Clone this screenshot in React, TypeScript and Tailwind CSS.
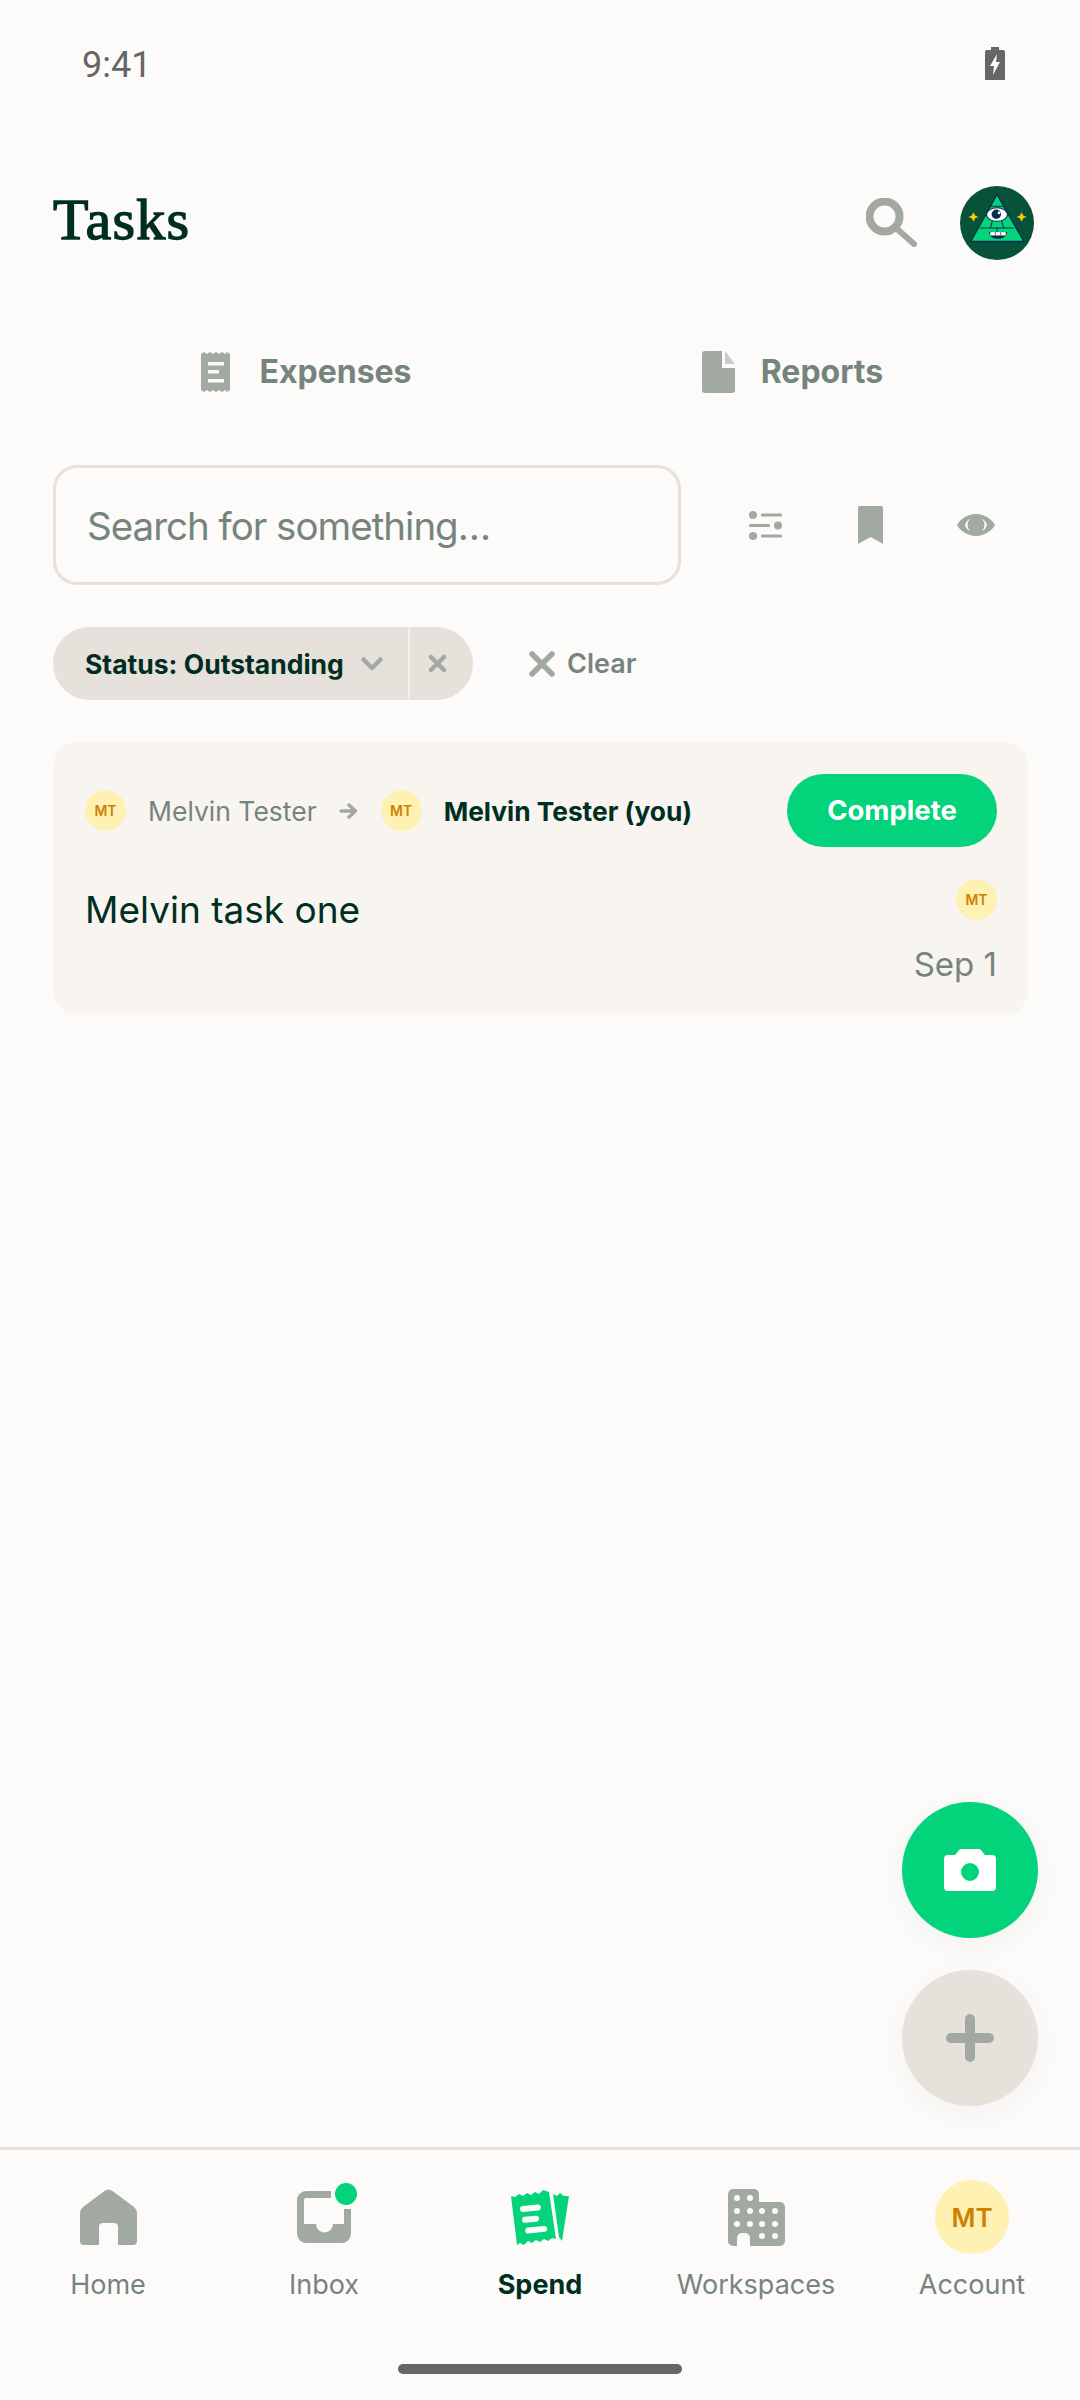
import React from "react";

const ICON = "#a2a9a3";
const BG = "#fcfbf9";
const SANS = "font-['Inter','Noto_Sans',sans-serif]";

function Initials({ large }: { large?: boolean }) {
  return (
    <div
      className={
        large
          ? "flex h-[74px] w-[74px] items-center justify-center rounded-full bg-[#fef1b2] text-[26px] font-semibold text-[#d08000]"
          : "flex h-[41px] w-[41px] shrink-0 items-center justify-center rounded-full bg-[#fef1b2] text-[14px] font-semibold text-[#d08000]"
      }
    >
      MT
    </div>
  );
}

function Avatar() {
  return (
    <svg width="74" height="74" viewBox="0 0 220 220">
      <circle cx="110" cy="110" r="110" fill="#085239" />
      <path d="M110 25 L190 165 H32 Z" fill="#03d47c" stroke="#0a2c4a" strokeWidth="4" strokeLinejoin="round" />
      <path d="M89 60 H131 M60 125 H160 M96 105 L90 125 M124 105 L130 125 M110 125 V138" stroke="#0a2c4a" strokeWidth="3" fill="none" />
      <ellipse cx="110" cy="85" rx="31" ry="20" fill="#fff" stroke="#0a2c4a" strokeWidth="3" />
      <circle cx="108" cy="84" r="14" fill="#0a2c4a" />
      <circle cx="116" cy="80" r="4" fill="#fff" />
      <path d="M40 78 L45 88 L55 92 L45 96 L40 106 L35 96 L25 92 L35 88 Z" fill="#fcc800" />
      <path d="M183 78 L188 88 L198 92 L188 96 L183 106 L178 96 L168 92 L178 88 Z" fill="#fcc800" />
      <path d="M86 137 H140 C138 152 125 157 113 157 C100 157 88 152 86 137 Z" fill="#0a2c4a" />
      <path d="M90 137 H136 V147 H90 Z" fill="#fff" />
      <path d="M105 137 V147 M121 137 V147" stroke="#0a2c4a" strokeWidth="2" />
    </svg>
  );
}

function ExpenseIcon() {
  return (
    <svg width="29" height="40" viewBox="0 0 29 40">
      <path
        fill={ICON}
        d="M0 2 L3 0 L6 2 L9 0 L12 2 L15 0 L18 2 L21 0 L24 2 L26 0 L29 2 V38 L26 40 L24 38 L21 40 L18 38 L15 40 L12 38 L9 40 L6 38 L3 40 L0 38 Z"
      />
      <path fill={BG} d="M7 10 H23 V13.5 H7 Z M7 18 H18 V21.5 H7 Z M7 27 H23 V30.5 H7 Z" />
    </svg>
  );
}

function ReportIcon() {
  return (
    <svg width="33" height="42" viewBox="0 0 33 42">
      <path fill={ICON} d="M3 0 H20 V17 H33 V39 A3 3 0 0 1 30 42 H3 A3 3 0 0 1 0 39 V3 A3 3 0 0 1 3 0 Z" />
      <path fill="#c9ccc8" d="M23 0 L33 13 H23 Z" />
    </svg>
  );
}

function SlidersIcon() {
  return (
    <svg width="33" height="29" viewBox="0 0 33 29">
      <g fill={ICON}>
        <circle cx="4" cy="4" r="4" />
        <rect x="12" y="2.5" width="21" height="3" rx="1" />
        <rect x="0" y="13" width="21" height="3" rx="1" />
        <circle cx="29" cy="14.5" r="4" />
        <circle cx="4" cy="25" r="4" />
        <rect x="12" y="23.5" width="21" height="3" rx="1" />
      </g>
    </svg>
  );
}

function BottomNav() {
  const items = [
    {
      label: "Home",
      icon: (
        <svg width="57" height="56" viewBox="0 0 57 56">
          <path
            fill={ICON}
            d="M24.5 2 Q28.5 -1 32.5 2 L54 18 Q57 20.5 57 24 V52 Q57 56 53 56 H38 V38 Q38 34 34 34 H23 Q19 34 19 38 V56 H4 Q0 56 0 52 V24 Q0 20.5 3 18 Z"
          />
        </svg>
      ),
    },
    {
      label: "Inbox",
      icon: (
        <div className="relative">
          <svg width="54" height="52" viewBox="0 0 54 52">
            <path
              fill={ICON}
              d="M34 0 H9 A9 9 0 0 0 0 9 V43 A9 9 0 0 0 9 52 H45 A9 9 0 0 0 54 43 V18 H47 V33 H36 A8.5 8.5 0 0 1 19 33 H7 V9 A2 2 0 0 1 9 7 H34 Z"
            />
          </svg>
          <div className="absolute -right-[6px] -top-[8px] h-[22px] w-[22px] rounded-full bg-[#03d47c]" />
        </div>
      ),
    },
    {
      label: "Spend",
      active: true,
      icon: (
        <svg width="58" height="55" viewBox="0 0 58 55">
          <path
            fill="#03d47c"
            d="M0 6 L4 7 L8 4 L12 6 L16 3 L20 5 L24 2 L28 4 L32 0 L38 2 L45 49 L41 48 L37 51 L33 49 L29 52 L25 50 L21 53 L17 51 L13 55 L9 53 L6 55 Z"
          />
          <path fill="#03d47c" d="M42 4 L46 6 L49 3 L53 6 L58 6 L51 51 L48 47 Z" />
          <g fill={BG} transform="rotate(-6 22 28)">
            <rect x="10" y="15" width="21" height="6" rx="3" />
            <rect x="11" y="26" width="17" height="6" rx="3" />
            <rect x="13" y="37" width="22" height="6" rx="3" />
          </g>
        </svg>
      ),
    },
    {
      label: "Workspaces",
      icon: (
        <svg width="57" height="57" viewBox="0 0 57 57">
          <path fill={ICON} d="M5 0 H26 A5 5 0 0 1 31 5 V13 H52 A5 5 0 0 1 57 18 V52 A5 5 0 0 1 52 57 H22 V49 A5 5 0 0 0 17 44 H14 A5 5 0 0 0 9 49 V57 H5 A5 5 0 0 1 0 52 V5 A5 5 0 0 1 5 0 Z" />
          <g fill={BG}>
            <circle cx="9" cy="9" r="3" />
            <circle cx="22" cy="9" r="3" />
            {[9, 22, 34, 47].map(x => (
              <circle key={`a${x}`} cx={x} cy="22" r="3" />
            ))}
            {[9, 22, 34, 47].map(x => (
              <circle key={`b${x}`} cx={x} cy="35" r="3" />
            ))}
            <circle cx="34" cy="47" r="3" />
            <circle cx="47" cy="47" r="3" />
          </g>
        </svg>
      ),
    },
    { label: "Account", icon: <Initials large /> },
  ];

  return (
    <div className="h-[253px] border-t-[3px] border-[#e6e1da] pt-[36px]">
      <div className="grid grid-cols-5">
        {items.map(item => (
          <div key={item.label} className="flex flex-col items-center">
            <div className="flex h-[62px] items-center justify-center">{item.icon}</div>
            <span
              className={
                item.active
                  ? "mt-[17px] text-[27px] leading-[40px] font-bold text-[#002e22]"
                  : "mt-[17px] text-[27px] leading-[40px] text-[#76847e]"
              }
            >
              {item.label}
            </span>
          </div>
        ))}
      </div>
      <div className="mt-[59px] flex justify-center">
        <div className="h-[10px] w-[284px] rounded-full bg-[#666666]" />
      </div>
    </div>
  );
}

export default function App() {
  return (
    <div className={`relative flex h-[2400px] w-[1080px] flex-col overflow-hidden bg-[#fcfbf9] ${SANS}`}>
      <div className="flex h-[127px] items-center justify-between pl-[82px] pr-[75px]">
        <span className="pt-[2px] font-['Roboto',sans-serif] text-[36px] text-[#666666]">9:41</span>
        <svg width="20" height="33" viewBox="0 0 20 33">
          <path fill="#666666" d="M6 0 H14 V3 H18 A2 2 0 0 1 20 5 V33 H0 V5 A2 2 0 0 1 2 3 H6 Z" />
          <path fill="#fff" d="M12 7 L5 19 H9 L8 28 L15 15 H11 Z" />
        </svg>
      </div>

      <div className="mt-[29px] flex h-[133px] items-center justify-between pl-[53px] pr-[46px]">
        <h1 className="pb-[5px] font-['Liberation_Serif',serif] text-[58px] leading-none tracking-[1.2px] text-[#002e22] [-webkit-text-stroke:1.4px_#002e22]">Tasks</h1>
        <div className="flex items-center gap-[43px]">
          <svg width="51" height="49" viewBox="0 0 51 49">
            <circle cx="18.5" cy="18.5" r="15" fill="none" stroke={ICON} strokeWidth="8" />
            <path d="M30 30 L48 46" stroke={ICON} strokeWidth="6" strokeLinecap="round" />
          </svg>
          <Avatar />
        </div>
      </div>

      <div className="mt-[27px] grid h-[112px] grid-cols-[487px_487px] items-center pl-[63px]">
        <div className="flex items-center justify-center gap-[29px]">
          <ExpenseIcon />
          <span className="text-[32px] font-bold text-[#76847e]">Expenses</span>
        </div>
        <div className="flex items-center justify-center gap-[26px] pr-[2px]">
          <ReportIcon />
          <span className="text-[32px] font-bold text-[#76847e]">Reports</span>
        </div>
      </div>

      <div className="mt-[37px] flex items-center pl-[53px]">
        <div className="flex h-[120px] w-[628px] items-center rounded-[24px] border-[3px] border-[#e6e1da] pl-[31px] pt-[3px] text-[38.5px] tracking-[-1px] text-[#76847e]">
          Search for something…
        </div>
        <div className="ml-[68px] flex w-[246px] items-center justify-between">
          <SlidersIcon />
          <svg className="ml-[2px]" width="25" height="38" viewBox="0 0 25 38">
            <path fill={ICON} d="M2 0 H23 A2 2 0 0 1 25 2 V38 L12.5 31 L0 38 V2 A2 2 0 0 1 2 0 Z" />
          </svg>
          <svg width="38" height="22" viewBox="0 0 38 22">
            <path fill={ICON} fillRule="evenodd" d="M19 0 C29 0 36 7 38 11 C36 15 29 22 19 22 C9 22 2 15 0 11 C2 7 9 0 19 0 Z M13 5 C11 5.5 9 8 8 11 C9 14 11 16.5 13 17 A8.5 8.5 0 0 1 13 5 Z M25 5 A8.5 8.5 0 0 1 25 17 C27 16.5 29 14 30 11 C29 8 27 5.5 25 5 Z" />
          </svg>
        </div>
      </div>

      <div className="mt-[42px] flex h-[73px] items-center pl-[53px]">
        <div className="flex h-full w-[355px] items-center rounded-l-full bg-[#e6e1da] pl-[32px]">
          <span className="pt-[2px] text-[26.5px] font-bold text-[#002e22]">Status: Outstanding</span>
          <svg className="ml-[17px]" width="22" height="14" viewBox="0 0 22 14">
            <path d="M2.5 2.5 L11 11 L19.5 2.5" fill="none" stroke={ICON} strokeWidth="4.5" strokeLinecap="round" strokeLinejoin="round" />
          </svg>
        </div>
        <div className="flex h-full w-[65px] items-center rounded-r-full border-l-2 border-[#f3f0ec] bg-[#e6e1da] pl-[18px]">
          <svg width="19" height="19" viewBox="0 0 19 19">
            <path d="M3 3 L16 16 M16 3 L3 16" stroke={ICON} strokeWidth="4.5" strokeLinecap="round" />
          </svg>
        </div>
        <svg className="ml-[56px]" width="26" height="26" viewBox="0 0 26 26">
          <path d="M3 3 L23 23 M23 3 L3 23" stroke={ICON} strokeWidth="5.5" strokeLinecap="round" />
        </svg>
        <span className="ml-[12px] pt-[2px] text-[27px] font-semibold text-[#76847e]">Clear</span>
      </div>

      <div className="mx-[53px] mt-[42px] flex h-[273px] w-[975px] flex-col rounded-[24px] bg-[#f8f4f0] pl-[32px] pr-[31px] pt-[32px]">
        <div className="flex h-[73px] items-center">
          <Initials />
          <span className="ml-[22px] pt-[2px] text-[26.5px] text-[#76847e]">Melvin Tester</span>
          <svg className="ml-[22px]" width="19" height="16" viewBox="0 0 19 16">
            <path d="M2 8 H16 M10 2 L16.5 8 L10 14" fill="none" stroke={ICON} strokeWidth="3.5" strokeLinecap="round" strokeLinejoin="round" />
          </svg>
          <div className="ml-[23px]">
            <Initials />
          </div>
          <span className="ml-[22px] pt-[2px] text-[26.3px] font-bold text-[#002e22]">Melvin Tester (you)</span>
          <div className="ml-auto flex h-[73px] w-[210px] items-center justify-center rounded-full bg-[#03d47c] text-[27.5px] font-bold text-white">
            Complete
          </div>
        </div>
        <div className="mt-[32px] flex justify-between">
          <span className="mt-[6px] text-[37px] leading-[50px] text-[#002e22]">Melvin task one</span>
          <div className="flex flex-col items-end">
            <Initials />
            <span className="mt-[20px] text-[33px] leading-[48px] text-[#76847e]">Sep 1</span>
          </div>
        </div>
      </div>

      <div className="flex-1" />
      <BottomNav />

      <div className="absolute left-[902px] top-[1802px] flex h-[136px] w-[136px] items-center justify-center rounded-full bg-[#03d47c] shadow-[0_8px_32px_rgba(0,0,0,0.04)]">
        <svg width="52" height="42" viewBox="0 0 52 42">
          <path fill="#fff" fillRule="evenodd" d="M16 0 H36 L41 6 H48 A4 4 0 0 1 52 10 V38 A4 4 0 0 1 48 42 H4 A4 4 0 0 1 0 38 V10 A4 4 0 0 1 4 6 H11 Z M26 14 A9 9 0 1 0 26 32 A9 9 0 1 0 26 14 Z" />
        </svg>
      </div>
      <div className="absolute left-[902px] top-[1970px] flex h-[136px] w-[136px] items-center justify-center rounded-full bg-[#e6e1da] shadow-[0_8px_32px_rgba(0,0,0,0.04)]">
        <svg width="48" height="48" viewBox="0 0 48 48">
          <path d="M24 5 V43 M5 24 H43" stroke={ICON} strokeWidth="10" strokeLinecap="round" />
        </svg>
      </div>
    </div>
  );
}
